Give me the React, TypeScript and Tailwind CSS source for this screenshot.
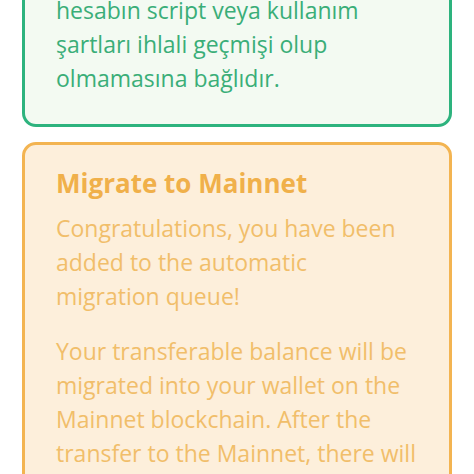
export default function App() {
  return (
    <div className="w-[474px] h-[474px] overflow-hidden bg-white" style={{ fontFamily: "'Open Sans', 'Noto Sans', sans-serif" }}>
      <div className="flex flex-col gap-[15px] px-[22px] mt-[-31px]">
        <div className="rounded-[14px] border-[3px] border-[#2db37e] bg-[#f3faf2] pl-[31px] pr-[16px] pt-[21px] pb-[29px]">
          <p className="text-[23px] leading-[34px] text-[#3aae78]">
            hesabın script veya kullanım<br />şartları ihlali geçmişi olup<br />olmamasına bağlıdır.
          </p>
        </div>
        <div className="rounded-[14px] border-[3px] border-[#f3b451] bg-[#fdefdb] pl-[31px] pr-[16px] pt-[21px] pb-[30px]">
          <h2 className="text-[26px] leading-[34px] font-bold text-[#f0b04a]">Migrate to Mainnet</h2>
          <p className="mt-[11px] text-[23px] leading-[34px] text-[#f1be6a]">
            Congratulations, you have been<br />added to the automatic<br />migration queue!
          </p>
          <p className="mt-[21px] text-[23px] leading-[34px] text-[#f1be6a]">
            Your transferable balance will be<br />migrated into your wallet on the<br />Mainnet blockchain. After the<br />transfer to the Mainnet, there will<br />be no further action required.
          </p>
        </div>
      </div>
    </div>
  );
}
